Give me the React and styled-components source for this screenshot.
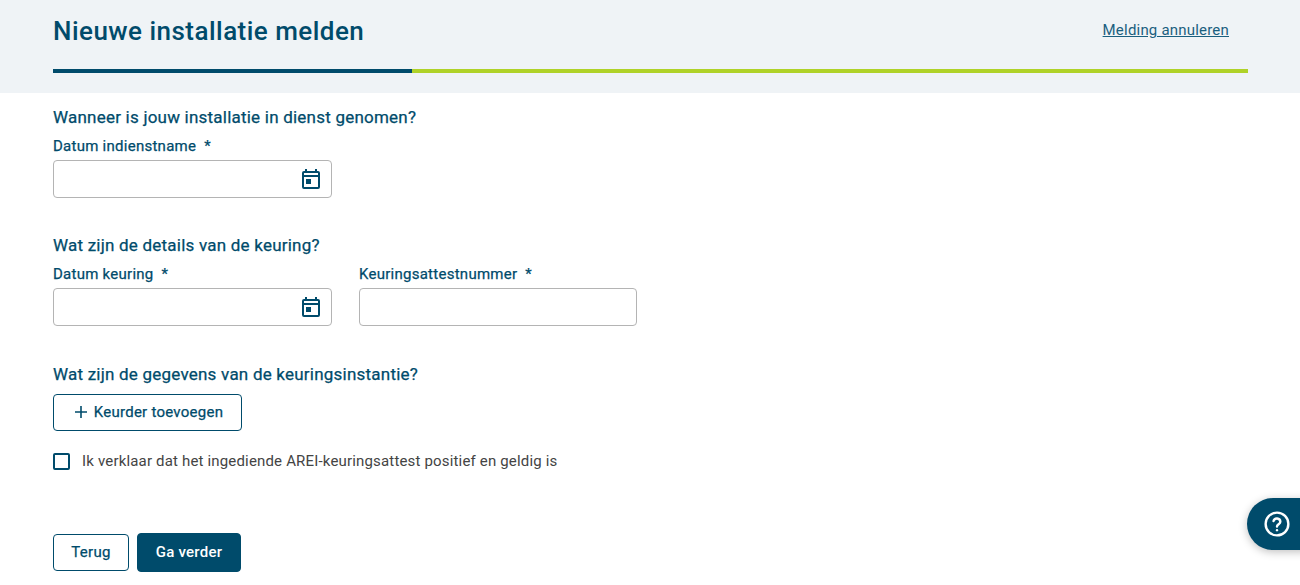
import React from "react";
import styled, { createGlobalStyle, css } from "styled-components";

const GlobalStyle = createGlobalStyle`
  html, body {
    margin: 0;
    padding: 0;
    background: #fff;
    font-family: Roboto, "Liberation Sans", sans-serif;
    color: #004b6b;
    overflow: hidden;
  }
`;

// the reference sits between Roboto 400 and 500, and only those two are installed
const semiMedium = css`
  font-weight: 400;
  -webkit-text-stroke: 0.25px currentColor;
`;

const Page = styled.div`
  position: relative;
  width: 1300px;
  height: 585px;
  overflow: hidden;
`;

const Header = styled.header`
  height: 93px;
  box-sizing: border-box;
  background: #eff3f6;
  padding: 0 52px 0 53px;
  display: flex;
  flex-direction: column;
`;

const HeaderRow = styled.div`
  height: 69px;
  display: flex;
  justify-content: space-between;
  padding: 14px 19px 0 0;
  box-sizing: border-box;
`;

const Title = styled.h1`
  margin: 0;
  font-size: 26px;
  line-height: 34px;
  font-weight: 500;
  letter-spacing: 0.47px;
  color: #004b6b;
`;

const CancelLink = styled.a`
  font-size: 15px;
  line-height: 33px;
  letter-spacing: 0.2px;
  color: #1a5f7f;
  text-decoration: underline;
`;

const Progress = styled.div`
  height: 4px;
  background: #afd228;
`;

const ProgressFill = styled.div`
  height: 100%;
  background: #004b6b;
`;

const Main = styled.main`
  padding: 14px 53px 0;
`;

const Section = styled.section`
  margin-bottom: ${(p) => p.$gap}px;
`;

const SectionTitle = styled.h2`
  margin: 0 0 ${(p) => p.$gap}px;
  font-size: 17px;
  line-height: 20px;
  ${semiMedium}
  letter-spacing: 0.22px;
  color: #004b6b;
`;

const FieldRow = styled.div`
  display: flex;
  gap: 27px;
`;

const Field = styled.div`
  width: ${(p) => p.$width || 279}px;
`;

const Label = styled.label`
  display: block;
  font-size: 15px;
  line-height: 18px;
  ${semiMedium}
  letter-spacing: 0.26px;
  color: #004b6b;
  margin-bottom: 5px;
  white-space: pre;
`;

const InputBox = styled.div`
  height: 38px;
  box-sizing: border-box;
  border: 1px solid #b4b4b4;
  border-radius: 4px;
  background: #fff;
  display: flex;
  align-items: center;
  justify-content: flex-end;
  padding-right: 8px;
`;

const Button = styled.button`
  box-sizing: border-box;
  font-family: inherit;
  font-size: 15px;
  ${semiMedium}
  letter-spacing: 0.26px;
  border-radius: 4px;
  border: 1px solid #004b6b;
  background: #fff;
  color: #004b6b;
  height: 37px;
  padding: ${(p) => (p.$icon ? "0 0 2px 1px" : "0 0 2px")};
  width: ${(p) => p.$width}px;
  display: flex;
  align-items: center;
  justify-content: center;
  gap: 5px;
`;

const PrimaryButton = styled(Button)`
  height: 39px;
  background: #004b6b;
  color: #fff;
  font-weight: 500;
  -webkit-text-stroke: 0;
  letter-spacing: 0.22px;
`;

const CheckRow = styled.div`
  display: flex;
  align-items: center;
  gap: 12px;
  margin-top: 21px;
  height: 18px;
`;

const CheckBox = styled.span`
  width: 17px;
  height: 17px;
  box-sizing: border-box;
  border: 2px solid #004b6b;
  border-radius: 2px;
  background: #fff;
`;

const CheckLabel = styled.span`
  font-size: 15px;
  letter-spacing: 0.17px;
  color: #444;
`;

const Actions = styled.div`
  display: flex;
  align-items: center;
  gap: 8px;
  margin-top: 63px;
`;

const HelpButton = styled.div`
  position: absolute;
  left: 1247px;
  top: 498px;
  width: 80px;
  height: 52px;
  border-radius: 26px;
  background: #004b6b;
  box-shadow: 0 2px 8px rgba(0, 0, 0, 0.25);
  padding-left: 17px;
  box-sizing: border-box;
  display: flex;
  align-items: center;
`;

const CalendarIcon = () => (
  <svg width="24" height="24" viewBox="0 0 24 24" fill="#004b6b">
    <path d="M19 4h-1V2h-2v2H8V2H6v2H5a2 2 0 0 0-2 2v14a2 2 0 0 0 2 2h14a2 2 0 0 0 2-2V6a2 2 0 0 0-2-2zm0 16H5V10h14v10zm0-12H5V6h14v2z" />
    <rect x="7" y="12" width="5" height="5" />
  </svg>
);

const PlusIcon = () => (
  <svg width="16" height="16" viewBox="0 0 16 16" stroke="#004b6b" strokeWidth="1.6" fill="none">
    <path d="M8 2v12M2 8h12" />
  </svg>
);

const HelpIcon = () => (
  <svg width="26" height="26" viewBox="0 0 24 24" fill="none" stroke="#fff" strokeWidth="2.2" strokeLinecap="round">
    <circle cx="12" cy="12" r="10.5" />
    <path d="M8.8 9.3a3.2 3.2 0 0 1 6.3.6c0 2.1-3.1 2.5-3.1 4.4" />
    <path d="M12 17.6v.1" />
  </svg>
);

export default function App() {
  return (
    <Page>
      <GlobalStyle />
      <Header>
        <HeaderRow>
          <Title>Nieuwe installatie melden</Title>
          <CancelLink>Melding annuleren</CancelLink>
        </HeaderRow>
        <Progress>
          <ProgressFill style={{ width: "30%" }} />
        </Progress>
      </Header>
      <Main>
        <Section $gap={37}>
          <SectionTitle $gap={10}>Wanneer is jouw installatie in dienst genomen?</SectionTitle>
          <Field>
            <Label>{"Datum indienstname  *"}</Label>
            <InputBox>
              <CalendarIcon />
            </InputBox>
          </Field>
        </Section>
        <Section $gap={38}>
          <SectionTitle $gap={10}>Wat zijn de details van de keuring?</SectionTitle>
          <FieldRow>
            <Field>
              <Label>{"Datum keuring  *"}</Label>
              <InputBox>
                <CalendarIcon />
              </InputBox>
            </Field>
            <Field $width={278}>
              <Label>{"Keuringsattestnummer  *"}</Label>
              <InputBox />
            </Field>
          </FieldRow>
        </Section>
        <Section $gap={0}>
          <SectionTitle $gap={10}>Wat zijn de gegevens van de keuringsinstantie?</SectionTitle>
          <Button $icon $width={189}>
            <PlusIcon />
            Keurder toevoegen
          </Button>
        </Section>
        <CheckRow>
          <CheckBox />
          <CheckLabel>Ik verklaar dat het ingediende AREI-keuringsattest positief en geldig is</CheckLabel>
        </CheckRow>
        <Actions>
          <Button $width={76}>Terug</Button>
          <PrimaryButton $width={104}>Ga verder</PrimaryButton>
        </Actions>
      </Main>
      <HelpButton>
        <HelpIcon />
      </HelpButton>
    </Page>
  );
}
